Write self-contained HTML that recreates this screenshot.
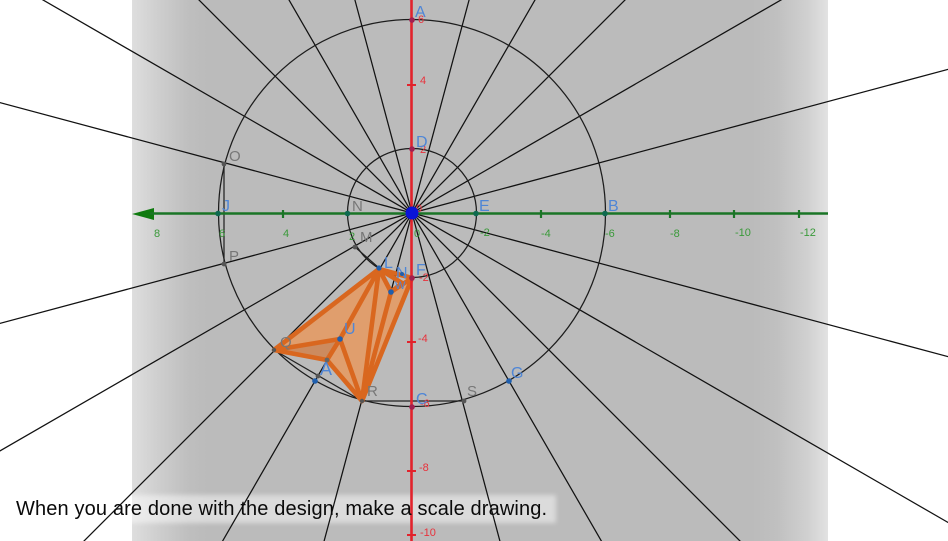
<!DOCTYPE html>
<html><head><meta charset="utf-8">
<style>
html,body{margin:0;padding:0;background:#fff;overflow:hidden}
#s{position:relative;width:948px;height:541px;overflow:hidden;background:#fff}
#g{position:absolute;left:132px;top:0;width:696px;height:541px;background:linear-gradient(90deg,#dedede 0,#cfcfcf 25px,#bfbfbf 55px,#bbb 75px,#bbb 620px,#c0c0c0 645px,#d0d0d0 675px,#e2e2e2 696px)}
#w{position:absolute;left:-20px;top:495px;width:576px;height:28px;background:rgba(255,255,255,.47);filter:blur(2.5px)}
svg{position:absolute;left:0;top:0;filter:blur(.22px)}
text{font-family:"Liberation Sans",sans-serif}
.r{fill:#e8323c;font-size:11px}
.n{fill:#3a9a3a;font-size:11px}
.b{fill:#4f86d6;font-size:16px}
.k{fill:#777;font-size:15px}
#t{position:absolute;left:16px;top:498px;font:20px/22px "Liberation Sans",sans-serif;color:#0a0a0a;white-space:nowrap;letter-spacing:.135px}
</style></head><body><div id="s">
<div id="g"></div>
<div id="w"></div>
<svg width="948" height="541" viewBox="0 0 948 541">
<g stroke="#111" stroke-width="1.25" fill="none">
<line x1="-1200" y1="213" x2="2000" y2="213" transform="rotate(15 412 213)"/>
<line x1="-1200" y1="213" x2="2000" y2="213" transform="rotate(30 412 213)"/>
<line x1="-1200" y1="213" x2="2000" y2="213" transform="rotate(45 412 213)"/>
<line x1="-1200" y1="213" x2="2000" y2="213" transform="rotate(60 412 213)"/>
<line x1="-1200" y1="213" x2="2000" y2="213" transform="rotate(75 412 213)"/>
<line x1="-1200" y1="213" x2="2000" y2="213" transform="rotate(105 412 213)"/>
<line x1="-1200" y1="213" x2="2000" y2="213" transform="rotate(120 412 213)"/>
<line x1="-1200" y1="213" x2="2000" y2="213" transform="rotate(135 412 213)"/>
<line x1="-1200" y1="213" x2="2000" y2="213" transform="rotate(150 412 213)"/>
<line x1="-1200" y1="213" x2="2000" y2="213" transform="rotate(165 412 213)"/>
<circle cx="412" cy="213" r="193.5" stroke="#1c1c1c"/>
<circle cx="412" cy="213" r="64.5" stroke="#1c1c1c"/>
<path d="M224 164L224 264M274 350L362 401L464 401M355 247L379 268L412 278" stroke="#222"/>
</g>
<g fill="#e59a62" fill-opacity=".88" stroke="none">
<path d="M379 269L274 350L327 360L362 401L412 278L402 283L391 292Z"/>
<path d="M274 350L340 339L327 360Z" fill="#c98a5f"/>
</g>
<g stroke="#d9671f" stroke-width="4.6" fill="none" stroke-linejoin="round" stroke-linecap="round">
<path d="M379 269L274 350L340 339L379 269L362 401L340 339L327 360L274 350"/>
<path d="M327 360L362 401L391 292L379 269L402 283L391 292L412 278L362 401"/>
<path d="M379 269L412 278"/>
</g>
<path d="M132 214L154 208L154 220Z" fill="#0f7a0f"/>
<line x1="150" y1="213.5" x2="828" y2="213.5" stroke="#1a7526" stroke-width="2.6"/>
<g stroke="#1a7526" stroke-width="2.2">
<line x1="283" y1="210" x2="283" y2="218"/><line x1="541" y1="210" x2="541" y2="218"/><line x1="670" y1="210" x2="670" y2="218"/><line x1="734" y1="210" x2="734" y2="218"/><line x1="799" y1="210" x2="799" y2="218"/>
</g>
<line x1="411.5" y1="0" x2="411.5" y2="541" stroke="#e2232c" stroke-width="2.6"/>
<g stroke="#e2232c" stroke-width="2">
<line x1="407" y1="85" x2="416" y2="85"/><line x1="407" y1="342" x2="416" y2="342"/><line x1="407" y1="471" x2="416" y2="471"/><line x1="407" y1="535" x2="416" y2="535"/>
</g>
<g>
<text class="r" x="418" y="23">6</text><text class="r" x="420" y="84">4</text><text class="r" x="420" y="153">2</text>
<text class="r" x="416" y="212">0</text><text class="r" x="419" y="281">-2</text><text class="r" x="418" y="342">-4</text>
<text class="r" x="420" y="407">-6</text><text class="r" x="419" y="471">-8</text><text class="r" x="420" y="536">-10</text>
</g>
<g>
<text class="n" x="154" y="237">8</text><text class="n" x="219" y="237">6</text><text class="n" x="283" y="237">4</text><text class="n" x="349" y="240">2</text><text class="n" x="414" y="237">0</text>
<text class="n" x="480" y="236">-2</text><text class="n" x="541" y="237">-4</text><text class="n" x="605" y="237">-6</text><text class="n" x="670" y="237">-8</text><text class="n" x="735" y="236">-10</text><text class="n" x="800" y="236">-12</text>
</g>
<g>
<text class="b" x="415" y="17">A</text><text class="b" x="416" y="147">D</text><text class="b" x="479" y="211">E</text><text class="b" x="608" y="211">B</text>
<text class="b" x="222" y="211">J</text><text class="b" x="416" y="404">C</text><text class="b" x="511" y="378">G</text><text class="b" x="416" y="275">F</text>
<text class="b" x="344" y="334">U</text><text class="b" x="384" y="268">L</text><text class="b" x="396" y="278">N</text><text class="b" x="395" y="289" style="font-size:11px">W</text><text class="b" x="320" y="375" style="font-size:18px">A</text>
<text class="k" x="229" y="161">O</text><text class="k" x="229" y="261">P</text><text class="k" x="352" y="211">N</text><text class="k" x="360" y="242">M</text>
<text class="k" x="467" y="396">S</text><text class="k" x="367" y="396">R</text><text class="k" x="280" y="347">Q</text>
</g>
<g>
<circle cx="218" cy="213.5" r="2.8" fill="#0f6a50"/><circle cx="347.5" cy="213.5" r="2.8" fill="#0f6a50"/><circle cx="476" cy="213.5" r="2.8" fill="#0f6a50"/><circle cx="605" cy="213.5" r="2.8" fill="#0f6a50"/>
<circle cx="412" cy="20" r="2.8" fill="#a02050"/><circle cx="412" cy="149" r="2.8" fill="#a02050"/><circle cx="412" cy="278" r="2.8" fill="#a02050"/><circle cx="412" cy="407" r="2.8" fill="#a02050"/>
<circle cx="224" cy="164" r="2.4" fill="#555"/><circle cx="224" cy="264" r="2.4" fill="#555"/><circle cx="355" cy="247" r="2.4" fill="#555"/><circle cx="464" cy="401" r="2.4" fill="#555"/><circle cx="362" cy="401" r="2.2" fill="#555"/><circle cx="274" cy="350" r="2.2" fill="#555"/><circle cx="318" cy="376" r="2.4" fill="#555"/><circle cx="327" cy="360" r="2.4" fill="#666"/>
<circle cx="315" cy="381" r="2.8" fill="#1f5fae"/><circle cx="509" cy="381" r="2.8" fill="#1f5fae"/><circle cx="340" cy="339" r="2.8" fill="#1f5fae"/><circle cx="391" cy="292" r="2.8" fill="#1f5fae"/><circle cx="379" cy="268" r="2.6" fill="#1f5fae"/><circle cx="402" cy="274" r="2" fill="#1f5fae"/>
<circle cx="412" cy="213" r="6.5" fill="#0a14d8"/>
</g>
</svg>
<div id="t">When you are done with the design, make a scale drawing.</div>
</div></body></html>
